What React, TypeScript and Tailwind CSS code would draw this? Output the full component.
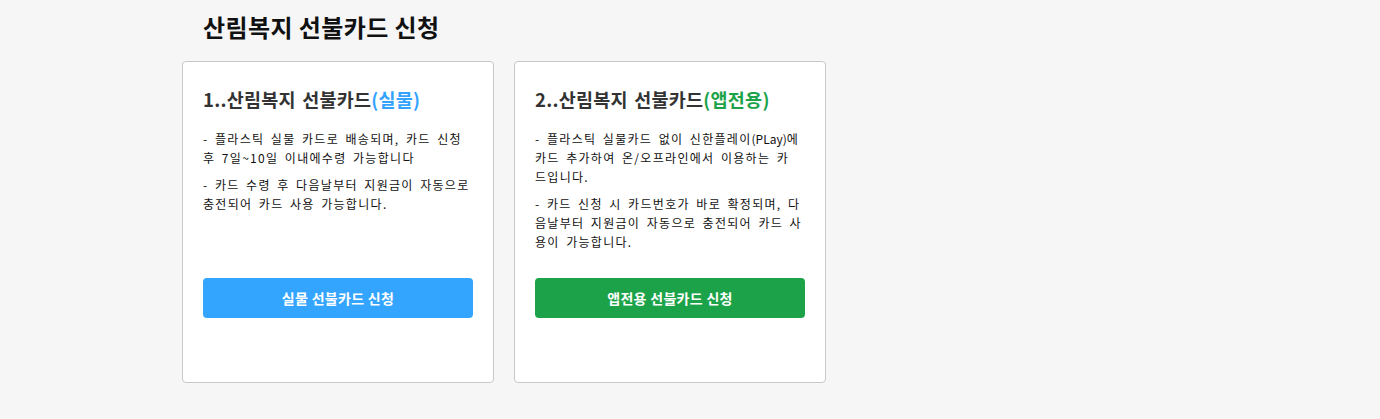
import type { ReactNode } from 'react';

const font = { fontFamily: '"Noto Sans CJK KR", "Noto Sans", sans-serif' };

interface CardProps {
  no: number;
  kind: string;
  kindColor: string;
  paras: ReactNode[];
  button: string;
  buttonColor: string;
}

function CardBox({ no, kind, kindColor, paras, button, buttonColor }: CardProps) {
  return (
    <div className="flex h-[322px] w-[312px] flex-col rounded-[4px] border border-[#c8c8c8] bg-white px-5 pt-[23px]">
      <h2 className="text-[18.5px] font-bold leading-[28px] tracking-[0.25px] text-[#333] [word-spacing:2px]">
        {no}..산림복지 선불카드<span className={kindColor}>({kind})</span>
      </h2>
      <div className="mt-[16px] h-[149px] text-[12px] leading-[19px] tracking-[1.3px] text-[#111] [word-spacing:2.5px]">
        {paras.map((p, i) => (
          <p key={i} className="mb-[8px]">
            {p}
          </p>
        ))}
      </div>
      <button
        className={`h-[40px] w-full rounded-[4px] text-[14px] font-bold tracking-[0.3px] text-white ${buttonColor}`}
      >
        {button}
      </button>
    </div>
  );
}

export default function App() {
  return (
    <div className="min-h-screen bg-[#f6f6f6]" style={font}>
      <div className="pl-[182px]">
        <h1 className="pl-[21px] pt-[9px] text-[24px] font-bold leading-[36px] tracking-[0.4px] text-[#111]">
          산림복지 선불카드 신청
        </h1>
        <div className="mt-[16px] flex gap-5">
          <CardBox
            no={1}
            kind="실물"
            kindColor="text-[#33a3ff]"
            paras={[
              '- 플라스틱 실물 카드로 배송되며, 카드 신청 후 7일~10일 이내에수령 가능합니다',
              '- 카드 수령 후 다음날부터 지원금이 자동으로 충전되어 카드 사용 가능합니다.',
            ]}
            button="실물 선불카드 신청"
            buttonColor="bg-[#33a5ff]"
          />
          <CardBox
            no={2}
            kind="앱전용"
            kindColor="text-[#1ca34a]"
            paras={[
              <>
                - 플라스틱 실물카드 없이 신한플레이<span className="tracking-normal">(PLay)</span>에 카드 추가하여
                온/오프라인에서 이용하는 카<br />드입니다.
              </>,
              '- 카드 신청 시 카드번호가 바로 확정되며, 다음날부터 지원금이 자동으로 충전되어 카드 사용이 가능합니다.',
            ]}
            button="앱전용 선불카드 신청"
            buttonColor="bg-[#1ca349]"
          />
        </div>
      </div>
    </div>
  );
}
